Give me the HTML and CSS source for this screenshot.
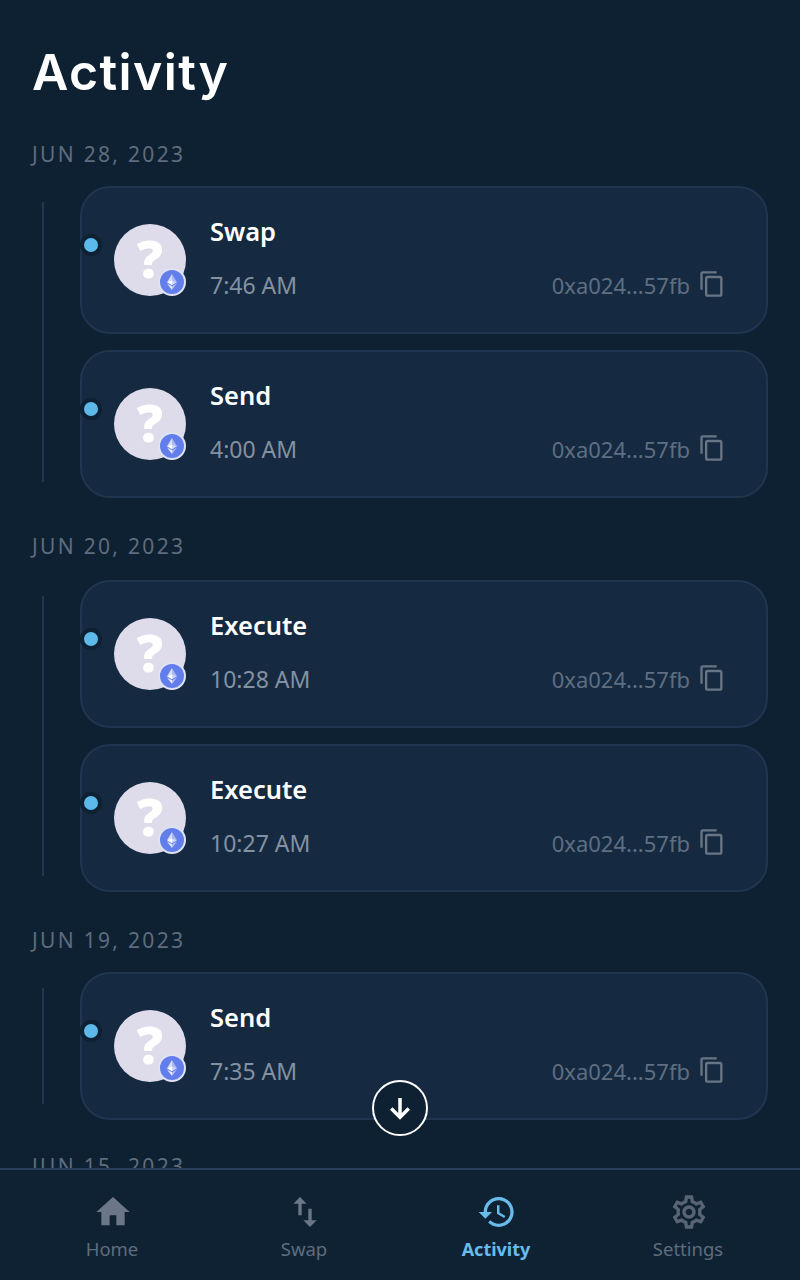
FILE: index.html
```html
<!DOCTYPE html>
<html lang="en">
<head>
<meta charset="utf-8">
<title>Activity</title>
<link rel="stylesheet" href="styles.css">
</head>
<body>
<div class="app">
  <main class="main">
    <h1 class="title">Activity</h1>

    <section class="group group-a">
      <h2 class="date">JUN 28, 2023</h2>
      <div class="list">
        <article class="card">
          <span class="dot"></span>
          <div class="avatar"><span class="qmark">?</span>
            <svg class="badge" viewBox="0 0 28 28"><circle cx="14" cy="14" r="13" fill="#627eea" stroke="#dfe2f2" stroke-width="2"/><path d="M14 6v6l-5 2.300z" fill="#fff" fill-opacity=".75"/><path d="M14 6v6l5 2.300z" fill="#fff" fill-opacity=".45"/><path d="M14 12l-5 2.300 5 2.900z" fill="#fff"/><path d="M14 12l5 2.300-5 2.900z" fill="#fff" fill-opacity=".7"/><path d="M9 15.500l5 6.500v-3.700z" fill="#fff" fill-opacity=".85"/><path d="M19 15.500l-5 6.500v-3.700z" fill="#fff" fill-opacity=".5"/></svg>
          </div>
          <div class="body">
            <div class="name">Swap</div>
            <div class="row"><span class="time">7:46 AM</span><span class="addr">0xa024...57fb<svg class="copy" viewBox="0 0 24 24"><path d="M16 1H4c-1.1 0-2 .9-2 2v14h2V3h12V1zm3 4H8c-1.1 0-2 .9-2 2v14c0 1.1.9 2 2 2h11c1.1 0 2-.9 2-2V7c0-1.1-.9-2-2-2zm0 16H8V7h11v14z"/></svg></span></div>
          </div>
        </article>
        <article class="card">
          <span class="dot"></span>
          <div class="avatar"><span class="qmark">?</span>
            <svg class="badge" viewBox="0 0 28 28"><circle cx="14" cy="14" r="13" fill="#627eea" stroke="#dfe2f2" stroke-width="2"/><path d="M14 6v6l-5 2.300z" fill="#fff" fill-opacity=".75"/><path d="M14 6v6l5 2.300z" fill="#fff" fill-opacity=".45"/><path d="M14 12l-5 2.300 5 2.900z" fill="#fff"/><path d="M14 12l5 2.300-5 2.900z" fill="#fff" fill-opacity=".7"/><path d="M9 15.500l5 6.500v-3.700z" fill="#fff" fill-opacity=".85"/><path d="M19 15.500l-5 6.500v-3.700z" fill="#fff" fill-opacity=".5"/></svg>
          </div>
          <div class="body">
            <div class="name">Send</div>
            <div class="row"><span class="time">4:00 AM</span><span class="addr">0xa024...57fb<svg class="copy" viewBox="0 0 24 24"><path d="M16 1H4c-1.1 0-2 .9-2 2v14h2V3h12V1zm3 4H8c-1.1 0-2 .9-2 2v14c0 1.1.9 2 2 2h11c1.1 0 2-.9 2-2V7c0-1.1-.9-2-2-2zm0 16H8V7h11v14z"/></svg></span></div>
          </div>
        </article>
      </div>
    </section>

    <section class="group group-b">
      <h2 class="date">JUN 20, 2023</h2>
      <div class="list">
        <article class="card">
          <span class="dot"></span>
          <div class="avatar"><span class="qmark">?</span>
            <svg class="badge" viewBox="0 0 28 28"><circle cx="14" cy="14" r="13" fill="#627eea" stroke="#dfe2f2" stroke-width="2"/><path d="M14 6v6l-5 2.300z" fill="#fff" fill-opacity=".75"/><path d="M14 6v6l5 2.300z" fill="#fff" fill-opacity=".45"/><path d="M14 12l-5 2.300 5 2.900z" fill="#fff"/><path d="M14 12l5 2.300-5 2.900z" fill="#fff" fill-opacity=".7"/><path d="M9 15.500l5 6.500v-3.700z" fill="#fff" fill-opacity=".85"/><path d="M19 15.500l-5 6.500v-3.700z" fill="#fff" fill-opacity=".5"/></svg>
          </div>
          <div class="body">
            <div class="name">Execute</div>
            <div class="row"><span class="time">10:28 AM</span><span class="addr">0xa024...57fb<svg class="copy" viewBox="0 0 24 24"><path d="M16 1H4c-1.1 0-2 .9-2 2v14h2V3h12V1zm3 4H8c-1.1 0-2 .9-2 2v14c0 1.1.9 2 2 2h11c1.1 0 2-.9 2-2V7c0-1.1-.9-2-2-2zm0 16H8V7h11v14z"/></svg></span></div>
          </div>
        </article>
        <article class="card">
          <span class="dot"></span>
          <div class="avatar"><span class="qmark">?</span>
            <svg class="badge" viewBox="0 0 28 28"><circle cx="14" cy="14" r="13" fill="#627eea" stroke="#dfe2f2" stroke-width="2"/><path d="M14 6v6l-5 2.300z" fill="#fff" fill-opacity=".75"/><path d="M14 6v6l5 2.300z" fill="#fff" fill-opacity=".45"/><path d="M14 12l-5 2.300 5 2.900z" fill="#fff"/><path d="M14 12l5 2.300-5 2.900z" fill="#fff" fill-opacity=".7"/><path d="M9 15.500l5 6.500v-3.700z" fill="#fff" fill-opacity=".85"/><path d="M19 15.500l-5 6.500v-3.700z" fill="#fff" fill-opacity=".5"/></svg>
          </div>
          <div class="body">
            <div class="name">Execute</div>
            <div class="row"><span class="time">10:27 AM</span><span class="addr">0xa024...57fb<svg class="copy" viewBox="0 0 24 24"><path d="M16 1H4c-1.1 0-2 .9-2 2v14h2V3h12V1zm3 4H8c-1.1 0-2 .9-2 2v14c0 1.1.9 2 2 2h11c1.1 0 2-.9 2-2V7c0-1.1-.9-2-2-2zm0 16H8V7h11v14z"/></svg></span></div>
          </div>
        </article>
      </div>
    </section>

    <section class="group group-c">
      <h2 class="date">JUN 19, 2023</h2>
      <div class="list">
        <article class="card">
          <span class="dot"></span>
          <div class="avatar"><span class="qmark">?</span>
            <svg class="badge" viewBox="0 0 28 28"><circle cx="14" cy="14" r="13" fill="#627eea" stroke="#dfe2f2" stroke-width="2"/><path d="M14 6v6l-5 2.300z" fill="#fff" fill-opacity=".75"/><path d="M14 6v6l5 2.300z" fill="#fff" fill-opacity=".45"/><path d="M14 12l-5 2.300 5 2.900z" fill="#fff"/><path d="M14 12l5 2.300-5 2.900z" fill="#fff" fill-opacity=".7"/><path d="M9 15.500l5 6.500v-3.700z" fill="#fff" fill-opacity=".85"/><path d="M19 15.500l-5 6.500v-3.700z" fill="#fff" fill-opacity=".5"/></svg>
          </div>
          <div class="body">
            <div class="name">Send</div>
            <div class="row"><span class="time">7:35 AM</span><span class="addr">0xa024...57fb<svg class="copy" viewBox="0 0 24 24"><path d="M16 1H4c-1.1 0-2 .9-2 2v14h2V3h12V1zm3 4H8c-1.1 0-2 .9-2 2v14c0 1.1.9 2 2 2h11c1.1 0 2-.9 2-2V7c0-1.1-.9-2-2-2zm0 16H8V7h11v14z"/></svg></span></div>
          </div>
        </article>
      </div>
    </section>

    <section class="group group-d">
      <h2 class="date">JUN 15, 2023</h2>
    </section>

    <button class="scroll-btn" type="button" aria-label="Scroll down">
      <svg viewBox="0 0 24 24"><path d="M12 3.500v16M4.500 12.500l7.500 7.500 7.500-7.500" fill="none" stroke="#fff" stroke-width="3"/></svg>
    </button>
  </main>

  <nav class="nav">
    <a class="tab"><svg class="tab-icon" viewBox="0 0 24 24"><path d="M10 20v-6h4v6h5v-8h3L12 3 2 12h3v8z"/></svg><span>Home</span></a>
    <a class="tab"><svg class="tab-icon" viewBox="0 0 24 24"><path d="M16 17.010V10h-2v7.010h-3L15 21l4-3.990h-3zM9 3L5 6.990h3V14h2V6.990h3L9 3z"/></svg><span>Swap</span></a>
    <a class="tab active"><svg class="tab-icon" viewBox="0 0 24 24"><path d="M13 3c-4.970 0-9 4.030-9 9H1l3.890 3.890.07.140L9 12H6c0-3.870 3.130-7 7-7s7 3.130 7 7-3.130 7-7 7c-1.930 0-3.680-.79-4.940-2.060l-1.420 1.420C8.270 19.990 10.510 21 13 21c4.970 0 9-4.030 9-9s-4.030-9-9-9zm-1 5v5l4.280 2.540.72-1.210-3.500-2.080V8H12z"/></svg><span>Activity</span></a>
    <a class="tab"><svg class="tab-icon" viewBox="0 0 24 24"><path d="M19.430 12.980c.04-.32.07-.64.07-.98 0-.34-.03-.66-.07-.98l2.110-1.650c.19-.15.24-.42.12-.64l-2-3.460c-.09-.16-.26-.25-.44-.25-.06 0-.12.01-.17.03l-2.490 1c-.52-.4-1.080-.73-1.690-.98l-.38-2.650C14.460 2.180 14.250 2 14 2h-4c-.25 0-.46.18-.49.42l-.38 2.650c-.61.25-1.170.59-1.690.98l-2.490-1c-.06-.02-.12-.03-.18-.03-.17 0-.34.09-.43.25l-2 3.460c-.13.22-.07.49.12.64l2.110 1.650c-.04.32-.07.65-.07.98 0 .33.03.66.07.98l-2.110 1.650c-.19.15-.24.42-.12.64l2 3.460c.09.16.26.25.44.25.06 0 .12-.01.17-.03l2.490-1c.52.4 1.080.73 1.690.98l.38 2.650c.03.24.24.42.49.42h4c.25 0 .46-.18.49-.42l.38-2.650c.61-.25 1.170-.59 1.690-.98l2.490 1c.06.02.12.03.18.03.17 0 .34-.09.43-.25l2-3.460c.12-.22.07-.49-.12-.64l-2.110-1.650zm-1.980-1.710c.04.31.05.52.05.73 0 .21-.02.43-.05.73l-.14 1.130.89.7 1.080.84-.7 1.210-1.270-.51-1.040-.42-.9.68c-.43.32-.84.56-1.250.73l-1.060.43-.16 1.130-.2 1.350h-1.400l-.19-1.350-.16-1.130-1.060-.43c-.43-.18-.83-.41-1.230-.71l-.91-.7-1.060.43-1.270.51-.7-1.210 1.080-.84.89-.7-.14-1.130c-.03-.31-.05-.54-.05-.74s.02-.43.05-.73l.14-1.130-.89-.7-1.080-.84.7-1.210 1.270.51 1.040.42.9-.68c.43-.32.84-.56 1.250-.73l1.060-.43.16-1.130.2-1.350h1.390l.19 1.350.16 1.130 1.060.43c.43.18.83.41 1.230.71l.91.7 1.060-.43 1.270-.51.7 1.210-1.070.85-.89.7.14 1.130zM12 8c-2.210 0-4 1.790-4 4s1.790 4 4 4 4-1.790 4-4-1.790-4-4-4zm0 6c-1.100 0-2-.9-2-2s.9-2 2-2 2 .9 2 2-.9 2-2 2z"/></svg><span>Settings</span></a>
  </nav>
</div>
</body>
</html>
```

FILE: styles.css
```css
* { box-sizing: border-box; }
html, body { margin: 0; height: 100%; }
body {
  background: #0e2132;
  color: #fff;
  font-family: "Noto Sans", "Open Sans", sans-serif;
}
.app {
  height: 1280px;
  display: flex;
  flex-direction: column;
  overflow: hidden;
}
.main {
  flex: 1;
  min-height: 0;
  overflow: hidden;
  padding: 0 32px;
  position: relative;
}
.title {
  margin: 0;
  padding-top: 38px;
  font-family: Inter, sans-serif;
  font-weight: 600;
  font-size: 50px;
  letter-spacing: 1.4px;
  line-height: 68px;
}
.group-a { margin-top: 34px; }
.group-b { margin-top: 34px; }
.group-c { margin-top: 34px; }
.group-d { margin-top: 32px; }
.date {
  margin: 0 0 18px;
  font-size: 21px;
  line-height: 28px;
  font-weight: 400;
  letter-spacing: 2.3px;
  color: #5e6c7e;
}
.group-b .date { margin-bottom: 20px; }
.list {
  display: flex;
  flex-direction: column;
  gap: 16px;
  margin-left: 10px;
  padding-left: 38px;
  position: relative;
}
.list::before {
  content: "";
  position: absolute;
  left: 0;
  top: 16px;
  bottom: 16px;
  width: 2px;
  background: #22364d;
}
.card {
  position: relative;
  height: 148px;
  display: flex;
  align-items: center;
  gap: 24px;
  padding: 0 40px 0 32px;
  background: #152a40;
  border: 2px solid #1f3550;
  border-radius: 30px;
}
.dot {
  position: absolute;
  left: -2px;
  top: 46px;
  width: 22px;
  height: 22px;
  border-radius: 50%;
  background: #5cb9ea;
  border: 4px solid #0e2132;
}
.avatar {
  position: relative;
  flex: none;
  width: 72px;
  height: 72px;
  border-radius: 50%;
  background: #dedbea;
  display: flex;
  align-items: center;
  justify-content: center;
}
.qmark {
  font-weight: 900;
  font-size: 52px;
  line-height: 68px;
  padding-bottom: 4px;
  color: #fff;
}
.badge {
  position: absolute;
  right: 0;
  bottom: 0;
  width: 28px;
  height: 28px;
}
.body { flex: 1; min-width: 0; }
.name {
  font-size: 25.5px;
  font-weight: 600;
  line-height: 34px;
  margin: -4px 0 20px;
}
.row {
  display: flex;
  align-items: center;
  justify-content: space-between;
}
.time {
  font-size: 23px;
  line-height: 34px;
  color: #8491a1;
}
.addr {
  display: flex;
  align-items: center;
  gap: 8px;
  font-size: 22px;
  line-height: 34px;
  color: #5f6e80;
}
.copy { width: 28px; height: 28px; fill: #687585; margin-bottom: 2px; }
.scroll-btn {
  position: absolute;
  left: 372px;
  top: 1080px;
  width: 56px;
  height: 56px;
  padding: 0;
  border-radius: 50%;
  border: 2px solid #fff;
  background: #0e2132;
  display: flex;
  align-items: center;
  justify-content: center;
}
.scroll-btn svg { width: 28px; height: 28px; }
.nav {
  flex: none;
  height: 112px;
  display: grid;
  grid-template-columns: repeat(4, 1fr);
  padding: 0 16px;
  background: #0f2234;
  border-top: 2px solid #2a3f5a;
}
.tab {
  display: flex;
  flex-direction: column;
  align-items: center;
  padding-top: 22px;
  font-size: 18.5px;
  line-height: 28px;
  color: #5e6c7e;
}
.tab-icon { width: 40px; height: 40px; fill: #6b7789; margin: 0 0 3px 2px; }
.tab:nth-child(4) .tab-icon { fill: #586474; }
.active { color: #67bcec; font-weight: 700; font-size: 18px; }
.active .tab-icon { fill: #67bcec; }
```
